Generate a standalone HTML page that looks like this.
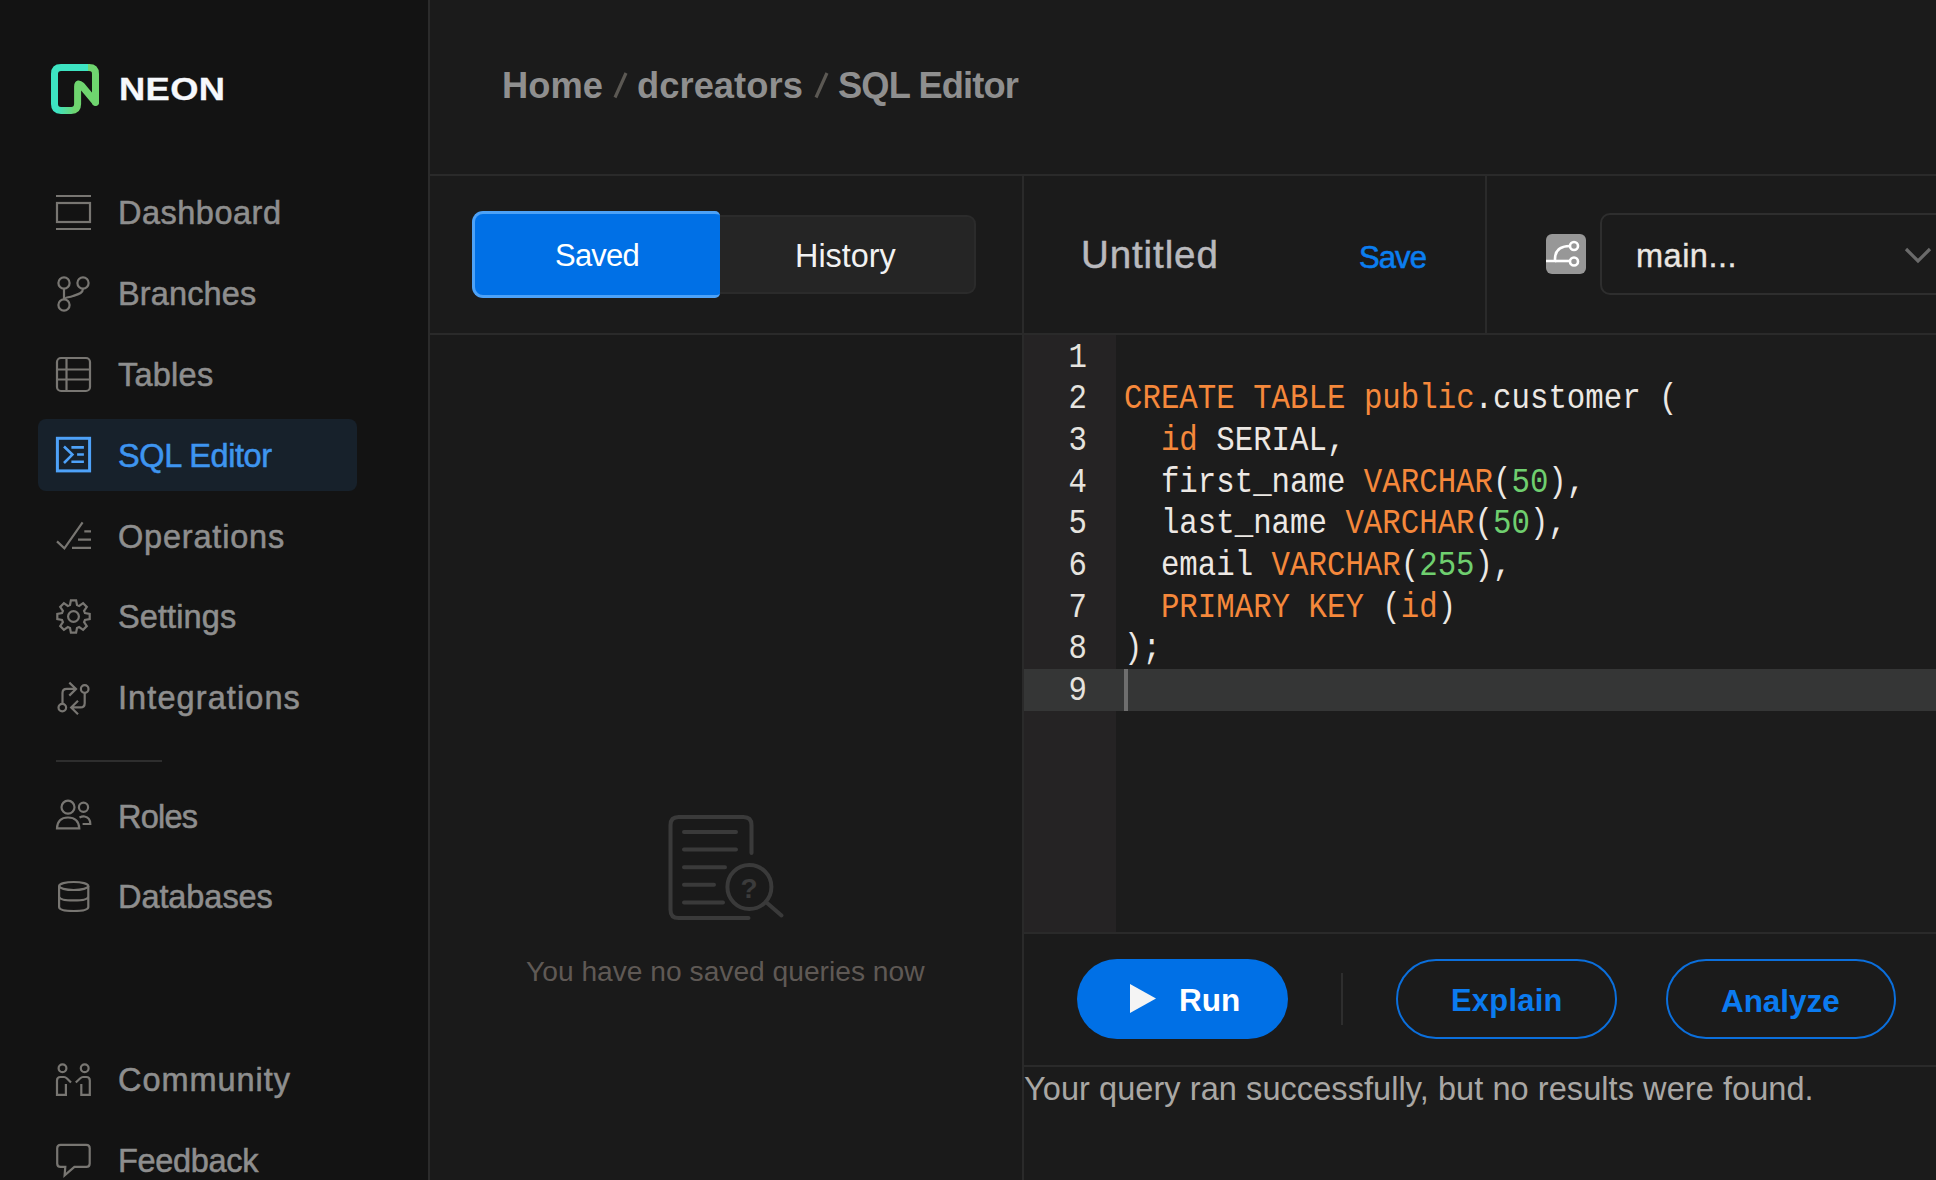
<!DOCTYPE html>
<html><head><meta charset="utf-8">
<style>
*{margin:0;padding:0;box-sizing:border-box}
html,body{width:1936px;height:1180px;overflow:hidden;background:#1b1b1b;font-family:"Liberation Sans",sans-serif}
.a{position:absolute}
.t{position:absolute;white-space:nowrap;line-height:1}
#side{left:0;top:0;width:428px;height:1180px;background:#131313}
.nav{font-size:32.5px;color:#8e8e8e;left:118px;-webkit-text-stroke:0.55px currentColor}
svg{position:absolute;overflow:visible}
.ic{fill:none;stroke:#787672;stroke-width:2.2}
.code{font-family:"Liberation Mono",monospace}
.k{color:#f5883b}.n{color:#6fcf6f}
</style></head><body>
<!-- sidebar -->
<div id="side" class="a"></div>
<div class="a" style="left:428px;top:0;width:2px;height:1180px;background:#2b2b2b"></div>

<div class="a" style="left:38px;top:419px;width:319px;height:72px;border-radius:8px;background:#17212b"></div>
<svg style="left:0;top:0" width="428" height="1180" viewBox="0 0 428 1180">
 <g class="ic">
  <!-- dashboard -->
  <path d="M56 196 H91 M56 229 H91"/>
  <rect x="57" y="203" width="33" height="19"/>
  <!-- branches -->
  <circle cx="64" cy="283" r="5.6"/><circle cx="83" cy="283" r="5.6"/><circle cx="64" cy="305" r="5.6"/>
  <path d="M64 288.6 V299.4"/>
  <path d="M83 288.6 C83 293 79 294 73 296 C67 298 64.5 297 64.5 300"/>
  <!-- tables -->
  <rect x="57" y="358" width="33" height="33" rx="4"/>
  <path d="M66.5 358 V391 M57 369.5 H90 M57 379.5 H90"/>
  <!-- operations -->
  <path d="M57 541.4 L64.4 548.3 L82.6 522.3"/>
  <path d="M84.3 531.4 H91 M78 539.7 H91 M72 547.9 H91"/>
  <!-- settings gear -->
  <path d="M70.00 605.02 L70.90 600.31 L76.10 600.31 L77.00 605.02 L79.14 605.91 L83.11 603.21 L86.79 606.89 L84.09 610.86 L84.98 613.00 L89.69 613.90 L89.69 619.10 L84.98 620.00 L84.09 622.14 L86.79 626.11 L83.11 629.79 L79.14 627.09 L77.00 627.98 L76.10 632.69 L70.90 632.69 L70.00 627.98 L67.86 627.09 L63.89 629.79 L60.21 626.11 L62.91 622.14 L62.02 620.00 L57.31 619.10 L57.31 613.90 L62.02 613.00 L62.91 610.86 L60.21 606.89 L63.89 603.21 L67.86 605.91 Z"/>
  <circle cx="73.5" cy="616.5" r="5.4"/>
  <!-- integrations -->
  <path d="M62.5 703.5 V693 Q62.5 688.8 66.7 688.8 H76.5 M69.3 682.6 L76 689 L69.3 695.6"/>
  <circle cx="62.3" cy="707.6" r="3.8"/>
  <circle cx="84.7" cy="689" r="3.8"/>
  <path d="M84.7 692.8 V703.2 Q84.7 707.4 80.5 707.4 H71 M78 700.8 L71.2 707.5 L78 714.2"/>
  <!-- roles -->
  <circle cx="68" cy="807.2" r="6.5"/>
  <path d="M57 828.3 Q57.5 817.5 68 817.5 Q78.6 817.5 79.3 828.3 Z"/>
  <circle cx="83.5" cy="807.2" r="4.6"/>
  <path d="M79.5 817.5 Q82 816.3 84.5 816.5 Q90.3 817.5 90.3 824 H82.6"/>
  <!-- databases -->
  <ellipse cx="73.7" cy="886" rx="14.6" ry="4"/>
  <path d="M59.1 886 V907 Q59.1 911 73.7 911 Q88.3 911 88.3 907 V886 M59.1 896.4 Q59.1 900.4 73.7 900.4 Q88.3 900.4 88.3 896.4"/>
  <!-- community -->
  <circle cx="62.5" cy="1068.3" r="3.9"/>
  <circle cx="84.7" cy="1068.3" r="3.9"/>
  <path d="M65.9 1084 V1094.8 H57 V1080.5 Q57 1077 60.5 1077 H64 Q65.5 1077 67 1078.5 L71 1082.5"/>
  <path d="M81.3 1084 V1094.8 H89.8 V1080.5 Q89.8 1077 86.3 1077 H83 Q81.7 1077 80 1078.5 L75.8 1082.5"/>
  <!-- feedback -->
  <path d="M60.6 1144.9 H86.3 Q89.7 1144.9 89.7 1148.3 V1163.5 Q89.7 1166.9 86.3 1166.9 H74.4 L64.6 1175.3 L65.3 1166.9 H60.6 Q57.2 1166.9 57.2 1163.5 V1148.3 Q57.2 1144.9 60.6 1144.9 Z"/>
 </g>
 <!-- sql editor icon -->
 <g fill="none" stroke="#4ea2f9" stroke-width="3">
  <rect x="57.4" y="438.3" width="32.2" height="32.6"/>
 </g>
 <g fill="none" stroke="#4ea2f9" stroke-width="2.6">
  <path d="M64 446.5 L72.4 454.6 L64 463 M71.4 447.4 H83.9 M77.1 454.5 H83.9 M71.4 461.8 H83.9"/>
 </g>
</svg>

<!-- logo -->
<svg style="left:51px;top:64px" width="48" height="50" viewBox="0 0 48 50">
  <defs><linearGradient id="lgb" gradientUnits="userSpaceOnUse" x1="6" y1="0" x2="24" y2="0"><stop offset="0" stop-color="#3de3c3"/><stop offset="1" stop-color="#6fd56f"/></linearGradient></defs>
  <g fill="none" stroke-width="7" stroke-linecap="round" stroke-linejoin="round">
  <path d="M39 3.6 H10 Q3.5 3.6 3.5 10 V40" stroke="#3de4c2" stroke-linecap="butt"/>
  <path d="M3.5 40 Q3.5 46.4 10 46.4 H20.2 Q26.6 46.4 26.6 40" stroke="url(#lgb)" stroke-linecap="butt"/>
  <path d="M26.6 40 V22.5 Q26.6 17.8 30.5 21.6 L44.5 38.2 V10 Q44.5 3.6 38 3.6 L37 3.6" stroke="#6fd56f" stroke-linecap="butt"/>
  <path d="M44.5 38.2 L44.5 38.3" stroke="#6fd56f"/>
  </g>
</svg>
<div class="t" style="left:118.5px;top:74px;font-size:30.5px;font-weight:bold;color:#f6f8fc;letter-spacing:0.3px;-webkit-text-stroke:0.3px #f6f8fc;transform:scaleX(1.19);transform-origin:0 0">NEON</div>

<!-- nav -->
<div class="t nav" style="top:197px;letter-spacing:0.50px">Dashboard</div>
<div class="t nav" style="top:278px;letter-spacing:0.14px">Branches</div>
<div class="t nav" style="top:359px;letter-spacing:0.24px">Tables</div>
<div class="t nav" style="top:440px;color:#3e95f0;letter-spacing:-0.41px">SQL Editor</div>
<div class="t nav" style="top:521px;letter-spacing:0.80px">Operations</div>
<div class="t nav" style="top:601px;letter-spacing:0.10px">Settings</div>
<div class="t nav" style="top:682px;letter-spacing:1.09px">Integrations</div>
<div class="a" style="left:56px;top:760px;width:106px;height:2px;background:#2e2e2e"></div>
<div class="t nav" style="top:801px;letter-spacing:-0.75px">Roles</div>
<div class="t nav" style="top:881px;letter-spacing:-0.07px">Databases</div>
<div class="t nav" style="top:1064px;letter-spacing:0.96px">Community</div>
<div class="t nav" style="top:1145px;letter-spacing:-0.33px">Feedback</div>

<!-- header -->
<div class="t" style="left:502px;top:68px;font-size:36.3px;font-weight:bold;color:#8f8f8f">Home</div>
<div class="t" style="left:637px;top:68px;font-size:36.3px;font-weight:bold;color:#8f8f8f;letter-spacing:0.05px">dcreators</div>
<div class="t" style="left:838px;top:68px;font-size:36.3px;font-weight:bold;color:#8f8f8f;letter-spacing:-0.9px">SQL Editor</div>
<svg style="left:0;top:0" width="1100" height="120" viewBox="0 0 1100 120"><path d="M615 97.5 L626 73 M816 97.5 L827 73" stroke="#5b5853" stroke-width="3.2" fill="none"/></svg>
<div class="a" style="left:430px;top:174px;width:1506px;height:2px;background:#2a2a2a"></div>

<!-- left panel -->
<div class="a" style="left:430px;top:335px;width:592px;height:845px;background:#1a1a1a"></div>
<div class="a" style="left:718px;top:215px;width:258px;height:79px;border-radius:0 9px 9px 0;background:#252525;border:2px solid #2b2b2b;border-left:none"></div>
<div class="a" style="left:472px;top:211px;width:248px;height:87px;border-radius:11px 5px 5px 11px;background:#0070e6;border:3.5px solid #4da2f8;border-right:none"></div>
<div class="t" style="left:555px;top:240px;font-size:31px;color:#fff;letter-spacing:-0.8px">Saved</div>
<div class="t" style="left:795px;top:240px;font-size:32.4px;color:#f2f2f2">History</div>
<div class="a" style="left:430px;top:333px;width:1506px;height:2px;background:#2a2a2a"></div>
<div class="a" style="left:1022px;top:176px;width:2px;height:1004px;background:#2a2a2a"></div>

<!-- editor header -->
<div class="t" style="left:1081px;top:236px;font-size:38.5px;color:#b9b9bd;letter-spacing:0.9px;-webkit-text-stroke:0.5px #b9b9bd">Untitled</div>
<div class="t" style="left:1359px;top:241.5px;font-size:31px;color:#0b7ef0;letter-spacing:-0.9px;-webkit-text-stroke:0.6px #0b7ef0">Save</div>
<div class="a" style="left:1485px;top:176px;width:2px;height:157px;background:#2a2a2a"></div>
<div class="a" style="left:1546px;top:234px;width:40px;height:40px;border-radius:6px;background:#979797"></div>
<svg style="left:1546px;top:234px" width="40" height="40" viewBox="0 0 40 40">
  <path d="M0 27 H9 V25 Q9 12 24 12" fill="none" stroke="#fff" stroke-width="2.6"/>
  <path d="M9 27 H24" fill="none" stroke="#fff" stroke-width="2.6"/>
  <circle cx="28" cy="12" r="4" fill="#979797" stroke="#fff" stroke-width="2.6"/>
  <circle cx="28" cy="27.5" r="4" fill="#979797" stroke="#fff" stroke-width="2.6"/>
</svg>
<div class="a" style="left:1600px;top:213px;width:360px;height:82px;border-radius:10px;border:2px solid #2e2e2e"></div>
<div class="t" style="left:1636px;top:240px;font-size:32.5px;color:#ebe7e2;letter-spacing:0.5px;-webkit-text-stroke:0.35px #ebe7e2">main...</div>
<svg style="left:1904px;top:247px" width="28" height="16" viewBox="0 0 28 16"><path d="M2 2 L14 14 L26 2" fill="none" stroke="#6a6a6a" stroke-width="3.2"/></svg>

<!-- code editor -->
<div class="a" style="left:1024px;top:335px;width:92px;height:597px;background:#252324"></div>
<div class="a" style="left:1116px;top:335px;width:820px;height:597px;background:#1c1c1c"></div>
<div class="a" style="left:1024px;top:669px;width:912px;height:42px;background:#353636"></div>
<div class="a" style="left:1124px;top:669px;width:4px;height:42px;background:#6e6e6e"></div>
<div class="a code" style="left:1024px;top:337.5px;width:63px;text-align:right;font-size:35px;line-height:41.7px;color:#e6e3df;white-space:pre;transform:scaleX(0.8784);transform-origin:100% 0">1
2
3
4
5
6
7
8
9</div>
<div class="a code" style="left:1124px;top:337.5px;font-size:35px;line-height:41.7px;color:#ece8e4;white-space:pre;transform:scaleX(0.8784);transform-origin:0 0"> 
<span class="k">CREATE</span> <span class="k">TABLE</span> <span class="k">public</span>.customer (
  <span class="k">id</span> SERIAL,
  first_name <span class="k">VARCHAR</span>(<span class="n">50</span>),
  last_name <span class="k">VARCHAR</span>(<span class="n">50</span>),
  email <span class="k">VARCHAR</span>(<span class="n">255</span>),
  <span class="k">PRIMARY</span> <span class="k">KEY</span> (<span class="k">id</span>)
);
 </div>

<div class="a" style="left:1024px;top:932px;width:912px;height:2px;background:#2a2a2a"></div>

<!-- buttons -->
<div class="a" style="left:1077px;top:959px;width:211px;height:80px;border-radius:40px;background:#0070e6"></div>
<svg style="left:1130px;top:984px" width="27" height="29" viewBox="0 0 27 29"><path d="M0 0 L26 14.5 L0 29 Z" fill="#f4f4f4"/></svg>
<div class="t" style="left:1179px;top:985px;font-size:31.5px;font-weight:bold;color:#fff">Run</div>
<div class="a" style="left:1341px;top:973px;width:2px;height:52px;background:#2e2e2e"></div>
<div class="a" style="left:1396px;top:959px;width:221px;height:80px;border-radius:40px;border:2px solid #0b6fdc"></div>
<div class="t" style="left:1451px;top:986px;font-size:30.8px;font-weight:bold;color:#0b7bf0;letter-spacing:0.3px">Explain</div>
<div class="a" style="left:1666px;top:959px;width:230px;height:80px;border-radius:40px;border:2px solid #0b6fdc"></div>
<div class="t" style="left:1721px;top:986px;font-size:31.4px;font-weight:bold;color:#0b7bf0">Analyze</div>
<div class="a" style="left:1024px;top:1065px;width:912px;height:2px;background:#2a2a2a"></div>
<div class="t" style="left:1024px;top:1073px;font-size:32.5px;letter-spacing:0.07px;color:#a9a7a4">Your query ran successfully, but no results were found.</div>

<!-- empty state -->
<svg style="left:650px;top:800px" width="150" height="130" viewBox="0 0 150 130">
  <g fill="none" stroke="#3a3a3a" stroke-width="4" stroke-linecap="round">
    <path d="M101.5 53 V25 Q101.5 17 93.5 17 H28.5 Q20.5 17 20.5 25 V110 Q20.5 118 28.5 118 H98.5"/>
    <path d="M34 32 H86 M34 49.6 H86 M34 67.2 H75 M34 84.8 H64 M34 102.4 H73"/>
    <circle cx="99.4" cy="87" r="22"/>
    <path d="M116.5 102.5 L131.5 115.5"/>
  </g>
  <text x="99" y="98" font-family="Liberation Sans" font-weight="bold" font-size="28" fill="#3b3b3b" text-anchor="middle">?</text>
</svg>
<div class="t" style="left:526px;top:957px;font-size:28.2px;color:#5f5955">You have no saved queries now</div>
</body></html>
